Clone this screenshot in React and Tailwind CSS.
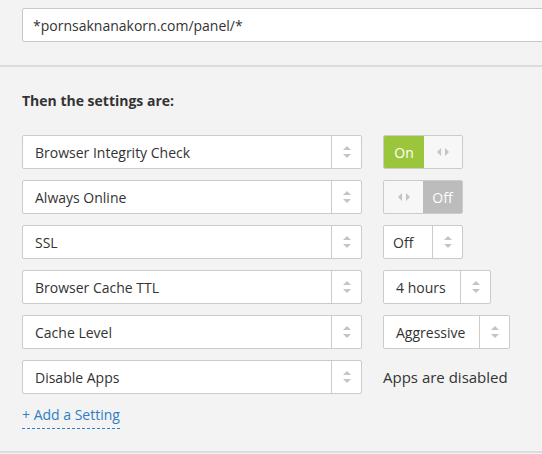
import React from "react";

const UpDown = () => (
  <svg width="10" height="14" viewBox="0 0 10 14" className="block">
    <path d="M5 1 L9 5 L1 5 Z" fill="#c4c4c4" />
    <path d="M5 13 L9 9 L1 9 Z" fill="#c4c4c4" />
  </svg>
);

const LeftRight = () => (
  <svg width="14" height="10" viewBox="0 0 14 10" className="block">
    <path d="M1 5 L5 1 L5 9 Z" fill="#c4c4c4" />
    <path d="M13 5 L9 1 L9 9 Z" fill="#c4c4c4" />
  </svg>
);

function Select({ label, width, arrowW = "w-[30px]", pad = "pl-[12px]" }) {
  return (
    <div className={`flex h-[34px] ${width} bg-white border border-[#cbcbcb] rounded-[2px]`}>
      <div className={`flex-1 flex items-center ${pad} text-[14px] text-[#333]`}>{label}</div>
      <div className={`${arrowW} border-l border-[#cbcbcb] flex items-center justify-center`}>
        <UpDown />
      </div>
    </div>
  );
}

function Toggle({ on }) {
  return (
    <div className="flex h-[34px] w-[80px] border border-[#cbcbcb] rounded-[2px] overflow-hidden bg-[#f7f7f7]">
      {on ? (
        <>
          <div className="w-[40px] bg-[#9bc63c] text-white text-[14px] flex items-center justify-center">On</div>
          <div className="flex-1 flex items-center justify-center"><LeftRight /></div>
        </>
      ) : (
        <>
          <div className="w-[39px] flex items-center justify-center"><LeftRight /></div>
          <div className="flex-1 bg-[#bcbcbc] text-white text-[14px] flex items-center justify-center">Off</div>
        </>
      )}
    </div>
  );
}

export default function App() {
  return (
    <div
      className="w-[542px] h-[454px] bg-[#f3f3f3] overflow-hidden text-[#333]"
      style={{ fontFamily: '"Open Sans", "Liberation Sans", sans-serif' }}
    >
      <div className="pl-[22px] pt-[8px] pb-[23px] border-b-2 border-[#dcdcdc]">
        <div className="h-[34px] w-[540px] bg-white border border-[#c9c9c9] rounded-[2px] flex items-center pl-[10px] text-[14px] text-[#333]">
          *pornsaknanakorn.com/panel/*
        </div>
      </div>
      <div className="pl-[22px] pt-[24px] pb-[22px] border-b-2 border-[#dcdcdc]">
        <div className="text-[14px] font-bold leading-[20px] text-[#333]">Then the settings are:</div>
        <div className="mt-[24px] flex flex-col gap-[11px]">
          <div className="flex gap-[21px] items-center">
            <Select label="Browser Integrity Check" width="w-[340px]" />
            <Toggle on />
          </div>
          <div className="flex gap-[21px] items-center">
            <Select label="Always Online" width="w-[340px]" />
            <Toggle on={false} />
          </div>
          <div className="flex gap-[21px] items-center">
            <Select label="SSL" width="w-[340px]" />
            <Select label="Off" width="w-[80px]" pad="pl-[9px]" />
          </div>
          <div className="flex gap-[21px] items-center">
            <Select label="Browser Cache TTL" width="w-[340px]" />
            <Select label="4 hours" width="w-[108px]" />
          </div>
          <div className="flex gap-[21px] items-center">
            <Select label="Cache Level" width="w-[340px]" />
            <Select label="Aggressive" width="w-[127px]" />
          </div>
          <div className="flex gap-[21px] items-center">
            <Select label="Disable Apps" width="w-[340px]" />
            <div className="text-[15px] text-[#333]">Apps are disabled</div>
          </div>
        </div>
        <div className="mt-[8px]">
          <span className="text-[14px] text-[#2f7ec4] border-b border-dashed border-[#2f7ec4] pb-[3px] leading-[20px] inline-block">
            + Add a Setting
          </span>
        </div>
      </div>
    </div>
  );
}
